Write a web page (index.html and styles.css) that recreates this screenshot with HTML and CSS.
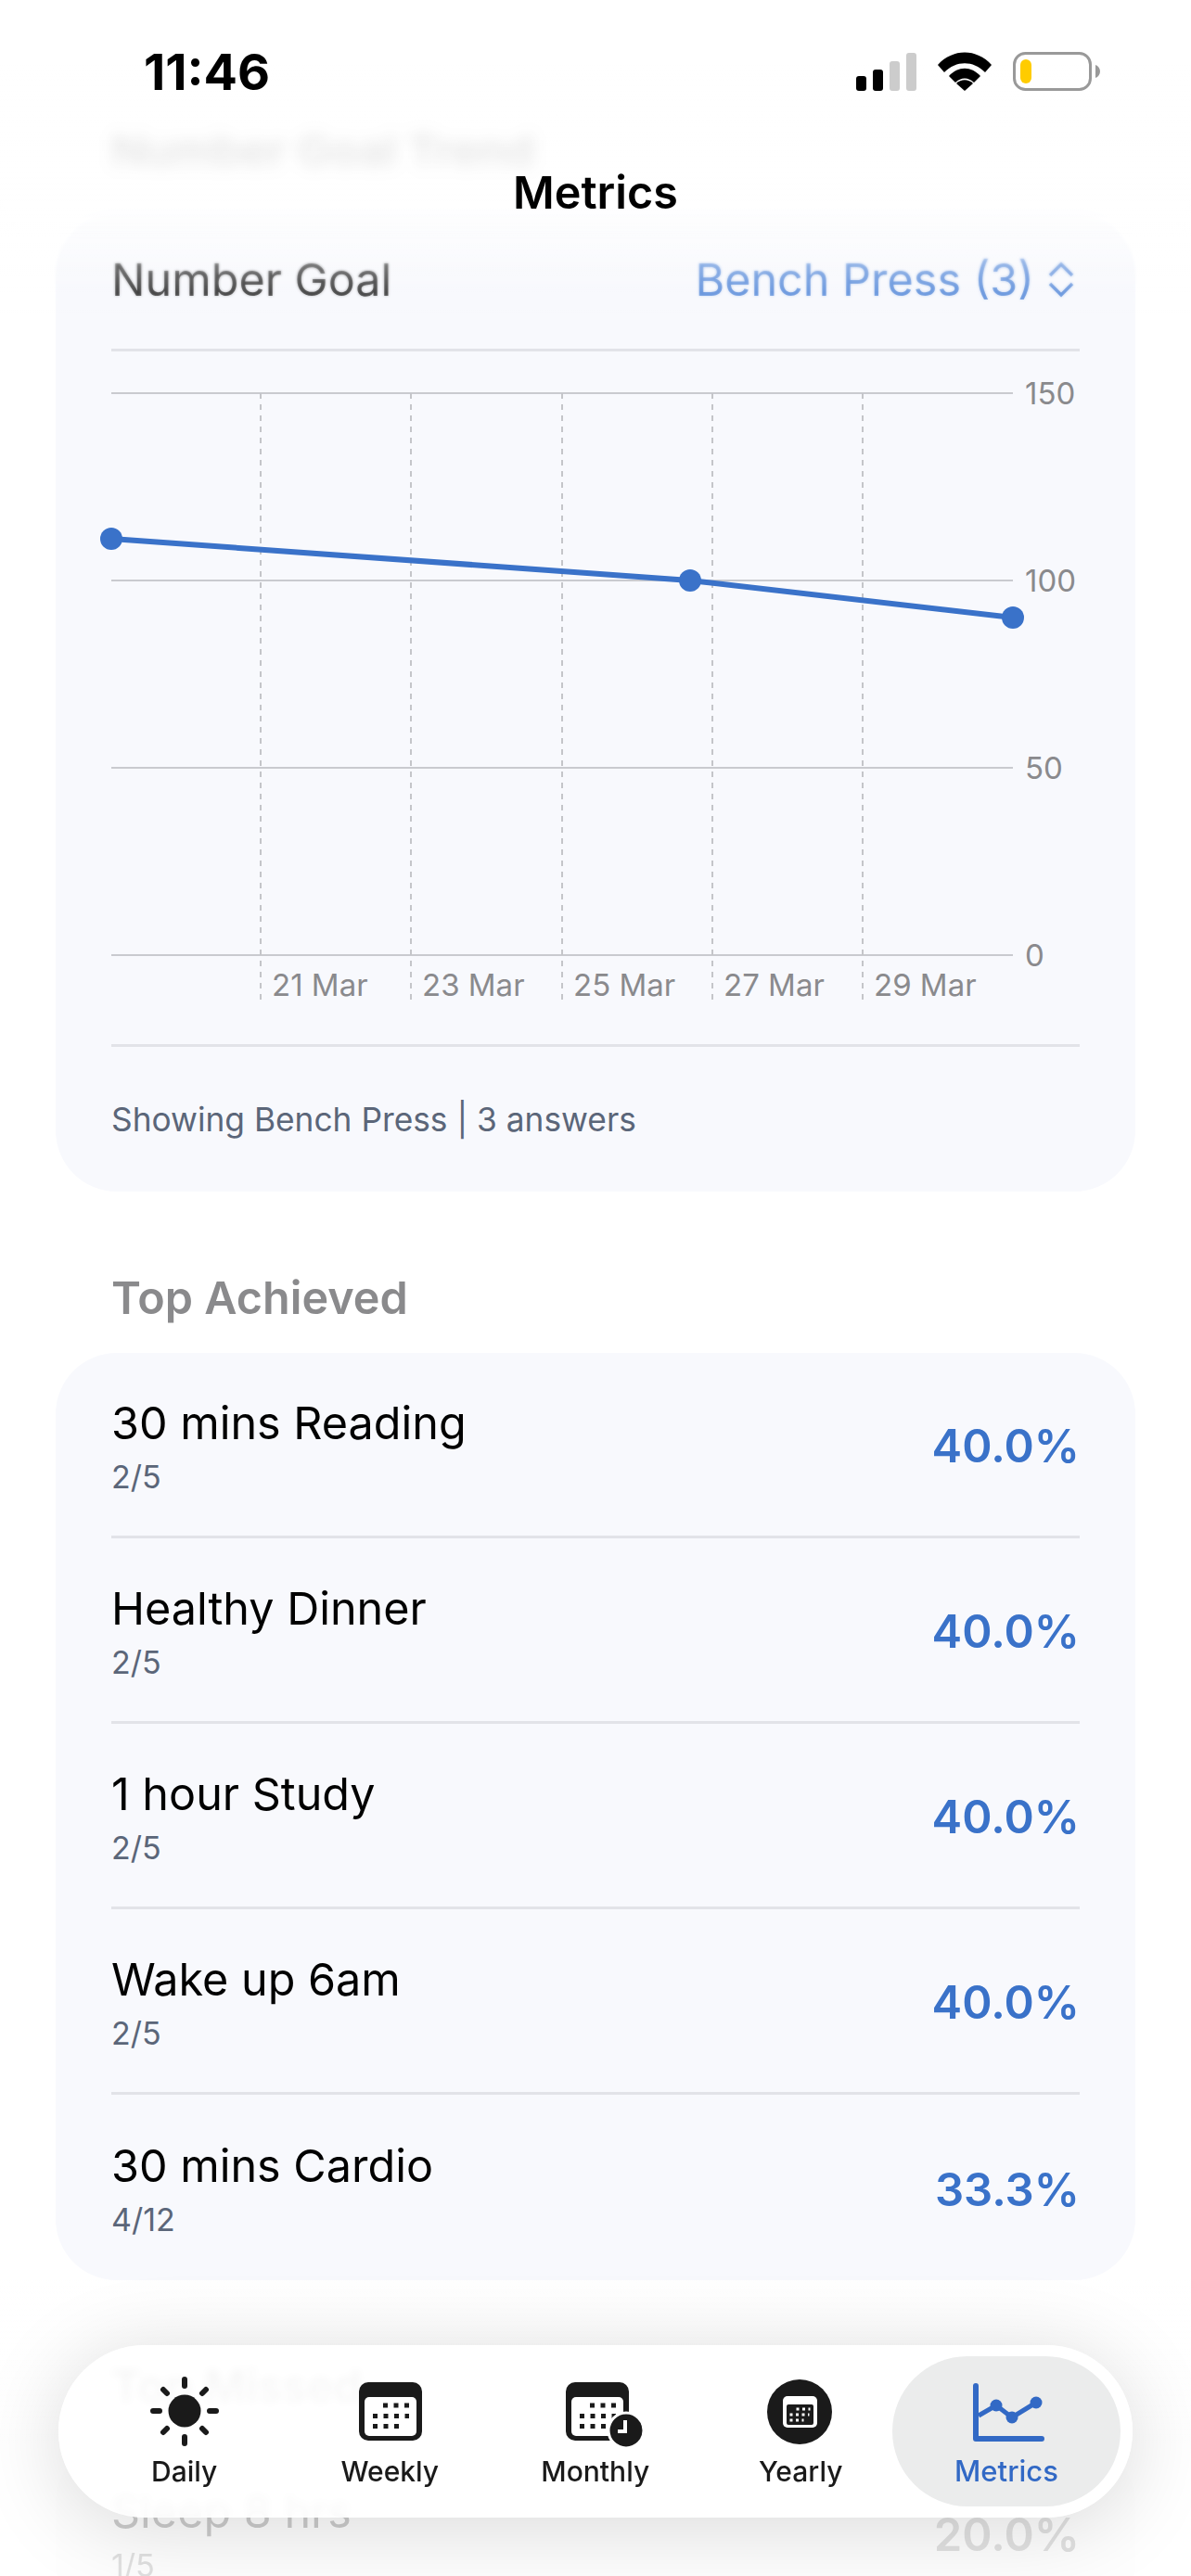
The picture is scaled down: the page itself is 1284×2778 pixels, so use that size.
FILE: index.html
```html
<!DOCTYPE html>
<html lang="en">
<head>
    <meta charset="UTF-8">
    <meta name="viewport" content="width=device-width, initial-scale=1.0">
    <title>Metrics</title>
    <link rel="stylesheet" href="styles.css">
</head>
<body>
<div class="screen">

    <!-- Scrolling content -->
    <main class="content">
        <h2 class="section-title first">Number Goal Trend</h2>

        <section class="card">
            <div class="card-head">
                <span class="card-name">Number Goal</span>
                <span class="picker">
                    Bench Press (3)
                    <svg class="chevrons" viewBox="0 0 30 40">
                        <path d="M3 16 15 4l12 12M3 25l12 12 12-12"/>
                    </svg>
                </span>
            </div>

            <svg class="chart" viewBox="0 0 1044 747">
                <g class="grid">
                    <path d="M0 45H972M0 247H972M0 449H972M0 651H972"/>
                </g>
                <g class="grid-dash">
                    <path d="M161 45V699M323 45V699M486 45V699M648 45V699M810 45V699"/>
                </g>
                <path class="trend" d="M0 202 624 247 972 287"/>
                <circle class="trend-dot" cx="0" cy="202" r="12"/>
                <circle class="trend-dot" cx="624" cy="247" r="12"/>
                <circle class="trend-dot" cx="972" cy="287" r="12"/>
                <text class="axis" x="985" y="45">150</text>
                <text class="axis" x="985" y="247">100</text>
                <text class="axis" x="985" y="449">50</text>
                <text class="axis" x="985" y="651">0</text>
                <text class="axis" x="173" y="683">21 Mar</text>
                <text class="axis" x="335" y="683">23 Mar</text>
                <text class="axis" x="498" y="683">25 Mar</text>
                <text class="axis" x="660" y="683">27 Mar</text>
                <text class="axis" x="822" y="683">29 Mar</text>
            </svg>

            <div class="card-foot">Showing Bench Press | 3 answers</div>
        </section>

        <h2 class="section-title">Top Achieved</h2>

        <section class="card">
            <div class="row">
                <div class="row-text">
                    <div class="row-name">30 mins Reading</div>
                    <div class="row-count">2/5</div>
                </div>
                <div class="row-pct">40.0%</div>
            </div>
            <div class="row">
                <div class="row-text">
                    <div class="row-name">Healthy Dinner</div>
                    <div class="row-count">2/5</div>
                </div>
                <div class="row-pct">40.0%</div>
            </div>
            <div class="row">
                <div class="row-text">
                    <div class="row-name">1 hour Study</div>
                    <div class="row-count">2/5</div>
                </div>
                <div class="row-pct">40.0%</div>
            </div>
            <div class="row">
                <div class="row-text">
                    <div class="row-name">Wake up 6am</div>
                    <div class="row-count">2/5</div>
                </div>
                <div class="row-pct">40.0%</div>
            </div>
            <div class="row last">
                <div class="row-text">
                    <div class="row-name">30 mins Cardio</div>
                    <div class="row-count">4/12</div>
                </div>
                <div class="row-pct">33.3%</div>
            </div>
        </section>

        <h2 class="section-title">Top Missed</h2>

        <section class="card">
            <div class="row">
                <div class="row-text">
                    <div class="row-name">Sleep 8 hrs</div>
                    <div class="row-count">1/5</div>
                </div>
                <div class="row-pct">20.0%</div>
            </div>
        </section>
    </main>

    <!-- Blur under the status bar and title -->
    <div class="top-soft"></div>
    <div class="top-blur"></div>

    <header class="top-bar">
        <div class="status">
            <span class="time">11:46</span>
            <div class="status-icons">
                <svg class="signal" viewBox="0 0 65 41">
                    <rect class="on" x="0" y="25" width="11" height="16" rx="3"/>
                    <rect class="on" x="18" y="18" width="11" height="23" rx="3"/>
                    <rect class="off" x="36" y="9" width="11" height="32" rx="3"/>
                    <rect class="off" x="54" y="0" width="11" height="41" rx="3"/>
                </svg>
                <svg class="wifi" viewBox="0 0 58 42">
                    <path d="M0 14C16-4 42-4 58 14L51 22C38 9 20 9 7 22Z"/>
                    <path d="M12 26C22 15 36 15 46 26L39 33C33 27 25 27 19 33Z"/>
                    <path d="M20 34C25 29 33 29 38 34L29 42Z"/>
                </svg>
                <svg class="battery" viewBox="0 0 94 42">
                    <rect class="battery-case" x="1.5" y="1.5" width="82" height="39" rx="12"/>
                    <rect class="battery-level" x="8" y="8" width="12" height="26" rx="6"/>
                    <path class="battery-nub" d="M89 14c3 1 5 4 5 7s-2 6-5 7Z"/>
                </svg>
            </div>
        </div>
        <h1 class="page-title">Metrics</h1>
    </header>

    <div class="bottom-fade"></div>

    <!-- Tab bar -->
    <nav class="tab-bar">
        <div class="tab">
            <svg class="tab-icon" viewBox="0 0 100 80">
                <circle class="solid" cx="50" cy="40" r="17.5"/>
                <path class="ray" d="M50 6v7M50 68v7M16 40h7M77 40h7M27 17l4 4M73 17l-4 4M27 63l4-4M73 63l-4-4"/>
            </svg>
            <span class="tab-label">Daily</span>
        </div>
        <div class="tab">
            <svg class="tab-icon" viewBox="0 0 100 80">
                <rect class="solid" x="17" y="9" width="68" height="63" rx="10"/>
                <rect class="paper" x="23" y="25" width="56" height="42" rx="5"/>
                <path class="dots" d="M43 34h28M32 45.500h39M32 56.500h28"/>
            </svg>
            <span class="tab-label">Weekly</span>
        </div>
        <div class="tab">
            <svg class="tab-icon" viewBox="0 0 100 80">
                <rect class="solid" x="18" y="9" width="68" height="63" rx="10"/>
                <rect class="paper" x="24" y="25" width="56" height="42" rx="5"/>
                <path class="dots" d="M44 34h28M33 45.500h39M33 56.500h28"/>
                <circle class="solid clock" cx="83" cy="61" r="19"/>
                <path class="clock-hand" d="M82 50V62H74"/>
            </svg>
            <span class="tab-label">Monthly</span>
        </div>
        <div class="tab">
            <svg class="tab-icon" viewBox="0 0 100 80">
                <circle class="solid" cx="49" cy="41" r="35"/>
                <rect class="paper" x="31" y="24" width="37" height="34" rx="5"/>
                <rect class="solid" x="35" y="33" width="29" height="22" rx="2"/>
                <path class="dots-small" d="M45.500 38h15M38.500 44h21M38.500 50h15"/>
            </svg>
            <span class="tab-label">Yearly</span>
        </div>
        <div class="tab active">
            <svg class="tab-icon" viewBox="0 0 100 80">
                <path class="metric-axes" d="M17 13V70H88"/>
                <path class="metric-line" d="M20 45 39 34 56 47 82 31"/>
                <circle class="metric-dot" cx="39" cy="34" r="6.500"/>
                <circle class="metric-dot" cx="56" cy="47" r="6.500"/>
                <circle class="metric-dot" cx="82" cy="31" r="6.500"/>
            </svg>
            <span class="tab-label">Metrics</span>
        </div>
    </nav>

</div>
</body>
</html>
```

FILE: styles.css
```css
* {
    box-sizing: border-box;
}
body {
    margin: 0;
    background-color: #fff;
    font-family: Inter, "Liberation Sans", sans-serif;
    color: #000;
}
.screen {
    position: relative;
    width: 1284px;
    height: 2778px;
    overflow: hidden;
    background-color: #fff;
}

/* Content */
.content {
    padding: 133px 60px 0;
}
.section-title {
    margin: 85px 0 29px;
    padding-left: 60px;
    font-size: 48.500px;
    line-height: 60px;
    font-weight: 600;
    color: #8a8a8c;
}
.section-title.first {
    margin: 0 0 37px;
    color: #444;
}
.card {
    background-color: #f8f9fd;
    border-radius: 66px;
    padding: 0 60px;
}
.card-head {
    display: flex;
    align-items: center;
    justify-content: space-between;
    height: 149px;
    padding-bottom: 4px;
    border-bottom: 3px solid #e2e3e8;
}
.card-name {
    font-size: 48.500px;
    color: #333;
}
.picker {
    display: flex;
    align-items: center;
    gap: 14px;
    margin-right: 5px;
    font-size: 48.500px;
    color: #5c8edb;
}
.chevrons {
    width: 30px;
    height: 40px;
    fill: none;
    stroke: #5c8edb;
    stroke-width: 3.500;
}
.chart {
    display: block;
    width: 1044px;
    height: 747px;
    overflow: visible;
}
.grid path {
    fill: none;
    stroke: #c9cacf;
    stroke-width: 2;
}
.grid-dash path {
    fill: none;
    stroke: #c4c5c9;
    stroke-width: 2;
    stroke-dasharray: 6 6;
}
.trend {
    fill: none;
    stroke: #3a72c9;
    stroke-width: 6;
}
.trend-dot {
    fill: #3a72c9;
}
.axis {
    font-size: 33px;
    fill: #8a8a8d;
    dominant-baseline: central;
}
.card-foot {
    display: flex;
    align-items: center;
    height: 159px;
    border-top: 3px solid #e2e3e8;
    font-size: 35.300px;
    color: #5b6679;
}

/* List rows */
.row {
    display: flex;
    align-items: center;
    justify-content: space-between;
    height: 200px;
    border-bottom: 3px solid #e2e3e8;
}
.row.last {
    border-bottom: none;
}
.row-text {
    padding-top: 7px;
}
.row-name {
    font-size: 48.500px;
    line-height: 60px;
}
.row-count {
    margin-top: 3px;
    font-size: 34px;
    line-height: 50px;
    color: #5b6679;
}
.row-pct {
    padding-top: 4px;
    font-size: 49px;
    font-weight: 600;
    color: #3a72c9;
}

/* Top area */
.top-soft {
    position: absolute;
    top: 0;
    left: 0;
    right: 0;
    height: 350px;
    background: linear-gradient(rgba(255, 255, 255, .8) 60%, rgba(255, 255, 255, 0));
    backdrop-filter: blur(1.500px);
    -webkit-mask-image: linear-gradient(#000 75%, transparent);
    mask-image: linear-gradient(#000 75%, transparent);
}
.top-blur {
    position: absolute;
    top: 0;
    left: 0;
    right: 0;
    height: 260px;
    background: linear-gradient(rgba(255, 255, 255, .9) 25%, rgba(255, 255, 255, .3) 60%, rgba(255, 255, 255, .6) 85%, rgba(255, 255, 255, .2));
    backdrop-filter: blur(8px);
    -webkit-mask-image: linear-gradient(#000 80%, transparent);
    mask-image: linear-gradient(#000 80%, transparent);
}
.top-bar {
    position: absolute;
    top: 0;
    left: 0;
    right: 0;
}
.status {
    display: flex;
    align-items: center;
    justify-content: space-between;
    height: 150px;
    padding: 4px 98px 0 155px;
}
.time {
    font-size: 54px;
    font-weight: 700;
}
.status-icons {
    display: flex;
    align-items: center;
    gap: 23px;
}
.signal {
    width: 65px;
    height: 41px;
}
.signal .on {
    fill: #000;
}
.signal .off {
    fill: #ccc;
}
.wifi {
    width: 58px;
    height: 42px;
    fill: #000;
}
.battery {
    width: 94px;
    height: 42px;
}
.battery-case {
    fill: none;
    stroke: #999;
    stroke-width: 3;
}
.battery-level {
    fill: #fc0;
}
.battery-nub {
    fill: #999;
}
.page-title {
    margin: 28px 0 0;
    text-align: center;
    font-size: 48.500px;
    line-height: 60px;
    font-weight: 600;
}

/* Bottom area */
.bottom-fade {
    position: absolute;
    left: 0;
    right: 0;
    bottom: 0;
    height: 319px;
    background: linear-gradient(rgba(255, 255, 255, 0), rgba(255, 255, 255, .8) 55%);
    backdrop-filter: grayscale(1);
}
.tab-bar {
    position: absolute;
    left: 63px;
    top: 2529px;
    display: flex;
    align-items: stretch;
    width: 1158px;
    height: 186px;
    padding: 12px 13px 12px 25px;
    border-radius: 93px;
    background-color: rgba(255, 255, 255, .86);
    backdrop-filter: blur(4px);
    box-shadow: 0 10px 90px rgba(0, 0, 0, .15);
}
.tab {
    display: flex;
    flex-direction: column;
    align-items: center;
    flex: 0 0 221.500px;
    padding-top: 19px;
    color: #1a1a1a;
}
.tab.active {
    flex: 0 0 246px;
    margin-left: -12px;
    border-radius: 81px;
    background-color: #ebecec;
    color: #3269c5;
}
.tab-icon {
    display: block;
    width: 100px;
    height: 80px;
    overflow: visible;
}
.tab-label {
    margin-top: 7px;
    font-size: 30px;
    line-height: 36px;
    font-weight: 500;
}
.tab.active .tab-label {
    font-size: 31px;
}
.solid {
    fill: #1a1a1a;
}
.paper {
    fill: #fff;
}
.ray {
    fill: none;
    stroke: #1a1a1a;
    stroke-width: 6;
    stroke-linecap: round;
}
.dots {
    fill: none;
    stroke: #1a1a1a;
    stroke-width: 5;
    stroke-dasharray: 5 6.500;
}
.dots-small {
    fill: none;
    stroke: #fff;
    stroke-width: 3;
    stroke-dasharray: 3 3.500;
}
.clock {
    stroke: #fff;
    stroke-width: 3;
}
.clock-hand {
    fill: none;
    stroke: #fff;
    stroke-width: 4;
}
.metric-axes {
    fill: none;
    stroke: #3269c5;
    stroke-width: 6;
    stroke-linecap: round;
    stroke-linejoin: round;
}
.metric-line {
    fill: none;
    stroke: #3269c5;
    stroke-width: 5;
}
.metric-dot {
    fill: #3269c5;
}
```
